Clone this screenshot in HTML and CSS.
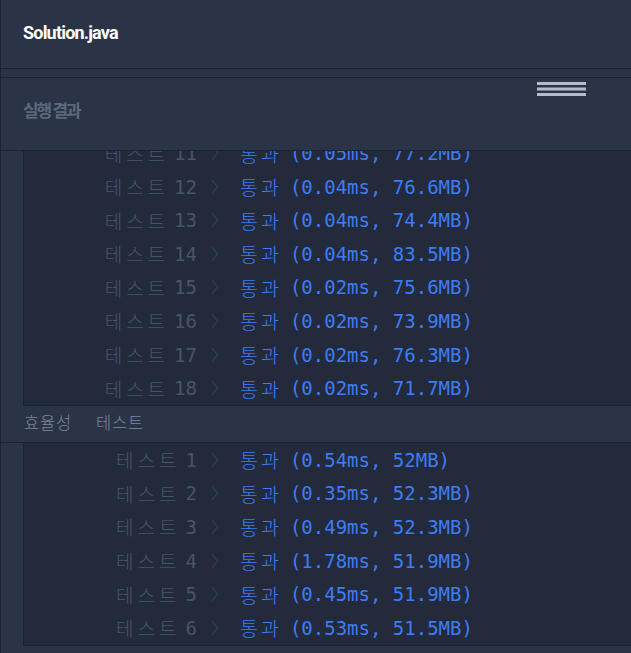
FILE: index.html
```html
<!DOCTYPE html>
<html lang="ko">
<head>
<meta charset="utf-8">
<title>Solution.java</title>
<link rel="stylesheet" href="styles.css">
</head>
<body>
<div class="app">
  <header class="file-bar">Solution.java</header>
  <div class="spacer"></div>
  <div class="result-bar">
    <h2 class="result-title">실행 결과</h2>
    <svg class="handle" width="49" height="14" viewBox="0 0 49 14"><rect x="0" y="0" width="49" height="3"/><rect x="0" y="5.5" width="49" height="3"/><rect x="0" y="11" width="49" height="3"/></svg>
  </div>
  <div class="output">
    <div class="group">
      <div class="rows scrolled">
        <div class="row"><span class="label"><span class="k">테스트</span><span class="n">11</span></span><svg class="chev" viewBox="0 0 8 16"><polyline points="1,1 6.5,8 1,15"/></svg><span class="res"><span class="k">통과</span><span class="num">(0.05ms, 77.2MB)</span></span></div>
        <div class="row"><span class="label"><span class="k">테스트</span><span class="n">12</span></span><svg class="chev" viewBox="0 0 8 16"><polyline points="1,1 6.5,8 1,15"/></svg><span class="res"><span class="k">통과</span><span class="num">(0.04ms, 76.6MB)</span></span></div>
        <div class="row"><span class="label"><span class="k">테스트</span><span class="n">13</span></span><svg class="chev" viewBox="0 0 8 16"><polyline points="1,1 6.5,8 1,15"/></svg><span class="res"><span class="k">통과</span><span class="num">(0.04ms, 74.4MB)</span></span></div>
        <div class="row"><span class="label"><span class="k">테스트</span><span class="n">14</span></span><svg class="chev" viewBox="0 0 8 16"><polyline points="1,1 6.5,8 1,15"/></svg><span class="res"><span class="k">통과</span><span class="num">(0.04ms, 83.5MB)</span></span></div>
        <div class="row"><span class="label"><span class="k">테스트</span><span class="n">15</span></span><svg class="chev" viewBox="0 0 8 16"><polyline points="1,1 6.5,8 1,15"/></svg><span class="res"><span class="k">통과</span><span class="num">(0.02ms, 75.6MB)</span></span></div>
        <div class="row"><span class="label"><span class="k">테스트</span><span class="n">16</span></span><svg class="chev" viewBox="0 0 8 16"><polyline points="1,1 6.5,8 1,15"/></svg><span class="res"><span class="k">통과</span><span class="num">(0.02ms, 73.9MB)</span></span></div>
        <div class="row"><span class="label"><span class="k">테스트</span><span class="n">17</span></span><svg class="chev" viewBox="0 0 8 16"><polyline points="1,1 6.5,8 1,15"/></svg><span class="res"><span class="k">통과</span><span class="num">(0.02ms, 76.3MB)</span></span></div>
        <div class="row"><span class="label"><span class="k">테스트</span><span class="n">18</span></span><svg class="chev" viewBox="0 0 8 16"><polyline points="1,1 6.5,8 1,15"/></svg><span class="res"><span class="k">통과</span><span class="num">(0.02ms, 71.7MB)</span></span></div>
      </div>
    </div>
    <div class="section-title"><span class="st-a">효율성</span><span class="st-b">테스트</span></div>
    <div class="group">
      <div class="rows">
        <div class="row"><span class="label"><span class="k">테스트</span><span class="n">1</span></span><svg class="chev" viewBox="0 0 8 16"><polyline points="1,1 6.5,8 1,15"/></svg><span class="res"><span class="k">통과</span><span class="num">(0.54ms, 52MB)</span></span></div>
        <div class="row"><span class="label"><span class="k">테스트</span><span class="n">2</span></span><svg class="chev" viewBox="0 0 8 16"><polyline points="1,1 6.5,8 1,15"/></svg><span class="res"><span class="k">통과</span><span class="num">(0.35ms, 52.3MB)</span></span></div>
        <div class="row"><span class="label"><span class="k">테스트</span><span class="n">3</span></span><svg class="chev" viewBox="0 0 8 16"><polyline points="1,1 6.5,8 1,15"/></svg><span class="res"><span class="k">통과</span><span class="num">(0.49ms, 52.3MB)</span></span></div>
        <div class="row"><span class="label"><span class="k">테스트</span><span class="n">4</span></span><svg class="chev" viewBox="0 0 8 16"><polyline points="1,1 6.5,8 1,15"/></svg><span class="res"><span class="k">통과</span><span class="num">(1.78ms, 51.9MB)</span></span></div>
        <div class="row"><span class="label"><span class="k">테스트</span><span class="n">5</span></span><svg class="chev" viewBox="0 0 8 16"><polyline points="1,1 6.5,8 1,15"/></svg><span class="res"><span class="k">통과</span><span class="num">(0.45ms, 51.9MB)</span></span></div>
        <div class="row"><span class="label"><span class="k">테스트</span><span class="n">6</span></span><svg class="chev" viewBox="0 0 8 16"><polyline points="1,1 6.5,8 1,15"/></svg><span class="res"><span class="k">통과</span><span class="num">(0.53ms, 51.5MB)</span></span></div>
      </div>
    </div>
  </div>
</div>
</body>
</html>
```

FILE: styles.css
```css
html, body {
  margin: 0;
  padding: 0;
  background: #2b3447;
}
body {
  width: 631px;
  height: 653px;
  overflow: hidden;
}
.app {
  height: 653px;
  border-left: 1px solid #1c2231;
  box-sizing: border-box;
  background: #2b3447;
}
.file-bar {
  height: 69px;
  border-bottom: 1px solid #1c2231;
  display: flex;
  align-items: center;
  padding-left: 22px;
  padding-bottom: 4px;
  box-sizing: border-box;
  font-family: Roboto, "Noto Sans", sans-serif;
  font-weight: 700;
  font-size: 18px;
  letter-spacing: -0.8px;
  color: #ffffff;
}
.spacer {
  height: 8px;
  border-bottom: 1px solid #1c2231;
}
.result-bar {
  height: 72px;
  border-bottom: 1px solid #1c2231;
  display: flex;
  justify-content: space-between;
  align-items: flex-start;
  padding-left: 22px;
  padding-right: 45px;
}
.result-title {
  margin: 21px 0 0 0;
  font-family: "Noto Sans CJK KR", sans-serif;
  font-weight: 700;
  font-size: 17px;
  letter-spacing: -2.2px;
  line-height: 22px;
  color: #5b697f;
}
.handle {
  margin-top: 4px;
  fill: #b3bdc9;
}
.output {
  font-family: "DejaVu Sans Mono", "Noto Sans CJK KR", monospace;
  font-size: 19px;
}
.group {
  margin-left: 22px;
  border-left: 1px solid #1c2231;
  border-bottom: 1px solid #1c2231;
  background: #232a3c;
  overflow: hidden;
}
.rows.scrolled {
  margin-top: -14.8px;
}
.row {
  display: flex;
  align-items: center;
  height: 33.6px;
  white-space: pre;
}
.label {
  width: 173px;
  display: flex;
  justify-content: flex-end;
  align-items: center;
  color: #4a5467;
  flex: none;
}
.k {
  font-family: "Noto Sans CJK KR", sans-serif;
  font-weight: 300;
}
.label .k {
  font-size: 19px;
  letter-spacing: 4px;
}
.n {
  margin-left: 5px;
}
.chev {
  width: 8px;
  height: 16px;
  margin-left: 14px;
  flex: none;
  fill: none;
  stroke: #363f52;
  stroke-width: 1.2;
}
.res {
  margin-left: 21px;
  display: flex;
  align-items: center;
  color: #3e7cf4;
}
.res .k {
  font-size: 19.5px;
  letter-spacing: 3px;
}
.num {
  margin-left: 8px;
}
.section-title {
  height: 37px;
  display: flex;
  align-items: center;
  padding-left: 23px;
  padding-bottom: 4px;
  border-bottom: 1px solid #1c2231;
  box-sizing: border-box;
  font-family: "Noto Sans CJK KR", sans-serif;
  font-size: 16.5px;
  font-weight: 300;
  letter-spacing: 0.8px;
  color: #7b8799;
}
.st-a {
  margin-right: 24px;
}
```
